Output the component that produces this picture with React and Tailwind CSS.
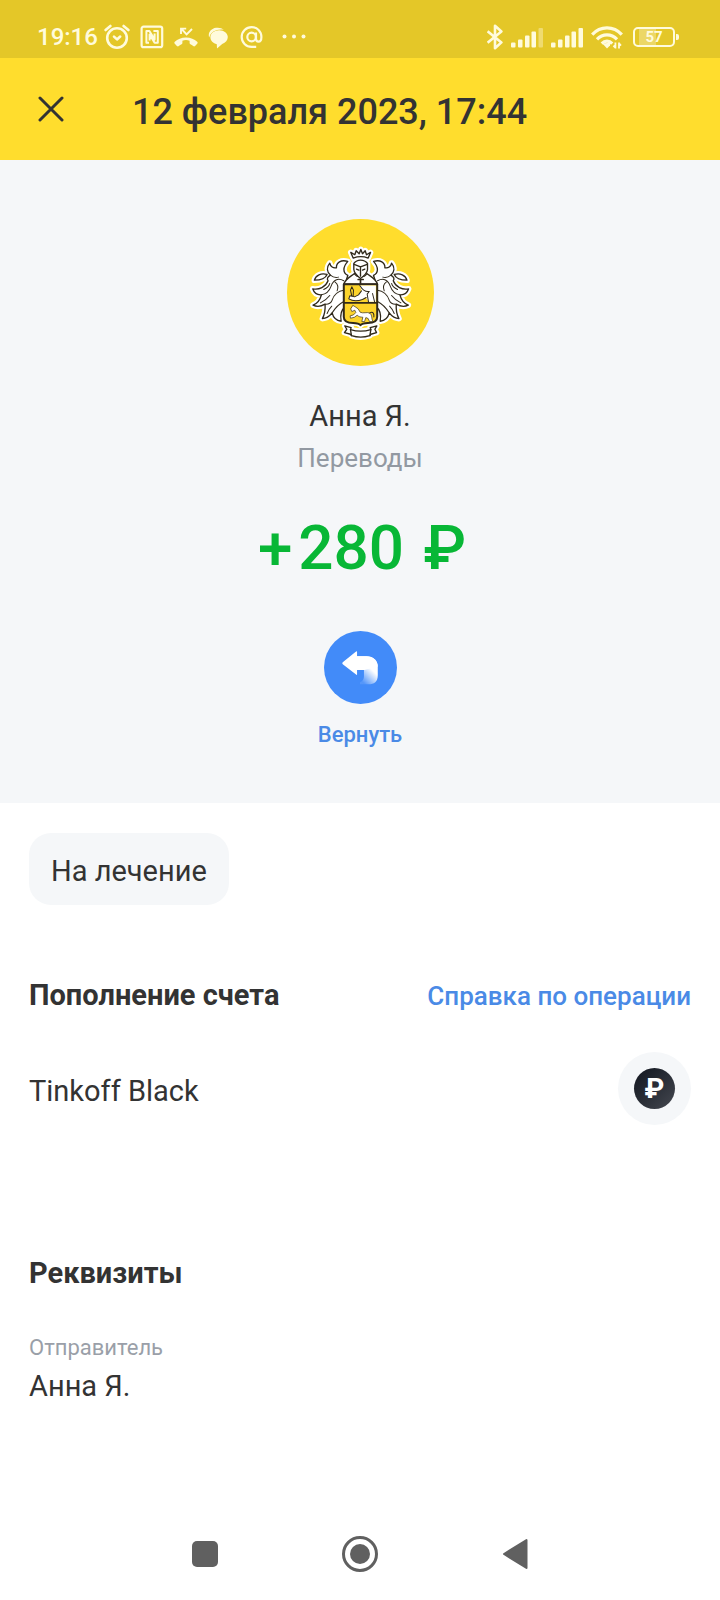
import React from "react";

function StatusBar() {
  return (
    <div className="flex h-[58px] items-center justify-between bg-[#e4c728] pt-[15px] pr-[41px] pl-[37px] text-[#fffbdc]">
      <div className="flex items-center gap-[10px]">
        <div className="flex items-center gap-[6px]">
          <span className="text-[24px] leading-[28px] font-medium">19:16</span>
          <svg className="h-[26px] w-[26px]" viewBox="0 0 26 26" fill="none" stroke="currentColor" strokeWidth="2.6" strokeLinecap="round" aria-label="Будильник">
            <circle cx="13" cy="14" r="9.8" />
            <path d="M1.6 6 6.4 2M24.4 6 19.6 2" />
            <path d="m10 12.6 3 2.8 3.2-2.8" strokeLinejoin="round" />
          </svg>
        </div>
        <svg className="h-[26px] w-[24px]" viewBox="0 0 24 26" fill="none" stroke="currentColor" strokeWidth="2.2" aria-label="NFC">
          <rect x="1.6" y="2.6" width="20.6" height="20.6" rx="2" />
          <path d="M9 18.8H6.400V7H9.400L14.600 15.600V9.400M13.400 7H17.800V18.800H14.600L9.600 10.600V16.400" strokeWidth="2" strokeLinejoin="round" />
        </svg>
        <svg className="h-[26px] w-[24px]" viewBox="0 0 24 26" fill="currentColor" aria-label="Пропущенный вызов">
          <path d="M12 13.4c4.6 0 8.4 1.7 11.2 4.4.6.6.6 1.4 0 2l-2.1 2.2c-.6.6-1.3.6-1.9.1-.9-.8-1.8-1.3-2.8-1.8-.5-.2-.8-.7-.8-1.3v-2.3c-2.3-.8-4.9-.8-7.2 0V19c0 .6-.3 1.1-.8 1.3-1 .5-1.9 1.1-2.8 1.8-.6.5-1.3.4-1.9-.1L.8 19.8c-.6-.6-.6-1.4 0-2C3.6 15.1 7.4 13.4 12 13.4Z" />
          <path d="m7.600 5 5 5.400L18 5M7 10V4.600h5.200" fill="none" stroke="currentColor" strokeWidth="1.900" />
        </svg>
        <svg className="h-[26px] w-[20px]" viewBox="0 0 20 26" fill="currentColor" aria-label="Сообщение">
          <path d="M1.200 13.600C-.4 9 2.800 4.600 8 3.800c3.200-.5 6 .4 7.800 2-7-1-13 1.800-14.600 7.800Z" />
          <path d="M11.200 6.200c4.900 0 8.600 3 8.600 6.900 0 3.400-2.200 5.800-5.600 6.900L9 24.400l-.2-4.200c-3.600-.6-6.400-3.600-6.400-6.900 0-4.100 3.900-7.100 8.800-7.100Z" />
        </svg>
        <svg className="h-[26px] w-[26px]" viewBox="0 0 26 26" fill="none" stroke="currentColor" strokeWidth="2.200" aria-label="Почта">
          <circle cx="13.600" cy="13" r="4.300" />
          <path d="M18 8.600v6.200c0 1.800 1 2.900 2.500 2.900s2.900-1.300 2.900-4.700c0-5.600-4.300-9.900-9.800-9.900S3.700 7.500 3.700 13s4.300 9.900 9.900 9.900h4.600" />
        </svg>
        <svg className="ml-2 h-[26px] w-[24px]" viewBox="0 0 24 26" fill="currentColor" aria-label="Ещё">
          <circle cx="2.500" cy="12.500" r="2" />
          <circle cx="12" cy="12.500" r="2" />
          <circle cx="21.500" cy="12.500" r="2" />
        </svg>
      </div>
      <div className="flex items-center gap-2">
        <svg className="h-[26px] w-[16px]" viewBox="0 0 16 26" fill="none" stroke="currentColor" strokeWidth="2.600" strokeLinejoin="round" aria-label="Bluetooth">
          <path d="M.6 7.200 14.400 18.400 8 24.200V1.800l6.400 5.600L.6 18.800" />
        </svg>
        <Signal full={false} />
        <Signal full={true} />
        <svg className="h-[26px] w-[34px]" viewBox="0 0 34 26" fill="none" stroke="currentColor" strokeWidth="3.200" aria-label="Wi-Fi">
          <path d="M1.200 10.600C9.400 1.600 22.600 1.600 30.800 10.600" />
          <path d="M6 15.400c5.600-6 14.400-6 20 0" />
          <path d="M10.800 19.600c3-3.200 7.400-3.200 10.400 0" />
          <path d="M11.400 19.600 16 24.600l3-3.200v-2.600Z" fill="currentColor" stroke="none" />
          <path d="M24.400 18.600v6M24.600 24l-2.200-2.400M28 24.600v-6M27.800 19.200l2.200 2.400" strokeWidth="1.800" />
        </svg>
        <div className="flex items-center" role="img" aria-label="Заряд 57%">
          <div className="flex h-[20px] w-[42px] items-center justify-center rounded-[5px] border-2 border-current bg-[linear-gradient(90deg,transparent_0_10%,#ecd766_10%_55%,transparent_55%)] text-[15px] leading-[16px] font-bold">
            57
          </div>
          <div className="ml-px h-[6px] w-[3px] rounded-r-[2px] bg-current" />
        </div>
      </div>
    </div>
  );
}

function Signal({ full }) {
  return (
    <svg className="h-[26px] w-[32px]" viewBox="0 0 32 26" fill="currentColor" aria-label="Сигнал сети">
      <rect x="0" y="18.500" width="4.500" height="5" rx="1" />
      <rect x="7" y="15.500" width="4.500" height="8" rx="1" />
      <rect x="14" y="11.500" width="4.500" height="12" rx="1" />
      <rect x="20.500" y="7.500" width="4.500" height="16" rx="1" />
      <rect x="27.500" y="4" width="4.500" height="19.500" rx="1" opacity={full ? 1 : 0.4} />
    </svg>
  );
}

const WING =
  "M142 64C122 58 107 67 108 83C98 85 90 80 88 69C77 82 80 96 90 105C82 110 78 115 83 122C76 140 56 150 37 146C41 158 50 165 63 164C60 176 50 190 38 195C50 201 62 199 74 192C75 208 73 222 66 235C78 235 88 227 95 218C98 230 106 241 122 243C119 226 121 210 134 200V130L142 106C127 98 126 82 142 64Z";
const LEAF = "M42 120C46 105 62 98 80 103C75 115 60 120 42 120Z";
const CROWN = "M218 144L211 127L223 134L227 122L236 131L241 118L246 131L254 122L258 134L270 127L263 144C250 139 232 139 218 144Z";
const HELMET = "M220 160C226 152 234 150 240 150C247 150 255 152 261 160V178C260 188 252 196 240 205C229 196 221 188 220 178Z";
const COLLAR = "M190 222C196 204 212 199 222 190C230 204 251 204 259 190C269 199 285 204 291 222Z";
const SHIELD = "M190 222H290V320C290 334 280 338 262 338C250 338 244 340 240 345C236 340 230 338 218 338C200 338 190 334 190 320Z";
const RIBBON = "M193 347L212 352L210 358C230 364 251 364 271 358L269 352L289 347L283 357L288 367L271 372L268 376C250 382 231 382 213 376L210 372L192 367L199 357Z";

function Wing() {
  return (
    <g transform="translate(60 90)">
      <path d={WING} />
      <path d={LEAF} />
    </g>
  );
}

function WingVeins() {
  return (
    <path
      transform="translate(60 90)"
      d="M130 122C112 112 98 120 92 138C87 152 78 162 63 164M130 150C114 152 100 164 95 180C91 189 84 193 74 192M130 184C114 192 104 204 95 218M104 126C112 132 114 142 110 152M90 105C98 112 106 113 114 111M70 148C80 144 86 138 88 130M60 188C72 182 82 174 88 166M80 220C84 210 88 204 94 198"
      fill="none"
      strokeWidth="3"
    />
  );
}

function Crest() {
  return (
    <svg className="h-[147px] w-[147px]" viewBox="20 27 440 440" role="img" aria-label="Герб">
      <circle cx="240" cy="247" r="220" fill="#ffdd2d" />
      <g fill="#fff" stroke="#fff" strokeWidth="17" strokeLinejoin="round">
        <Wing />
        <g transform="matrix(-1 0 0 1 481 0)">
          <Wing />
        </g>
        <path d={CROWN} />
        <path d={HELMET} />
        <path d={COLLAR} />
        <path d={SHIELD} />
        <path d={RIBBON} />
      </g>
      <g fill="#fff" stroke="#30291b" strokeWidth="4" strokeLinejoin="round" strokeLinecap="round">
        <Wing />
        <WingVeins />
        <g transform="matrix(-1 0 0 1 481 0)">
          <Wing />
          <WingVeins />
        </g>
        <path d={CROWN} />
        <path d={COLLAR} />
        <path d={HELMET} />
        <path d="M221 163L240 170L260 163M240 170V198M228 177L235 180M253 177L246 180" fill="none" />
        <path d="M233 208H248M240 208V221" fill="none" strokeWidth="5" />
        <path d={SHIELD} fill="#fcd42c" strokeWidth="6" />
        <path d="M238 226H286V275H264L256 262L246 268C232 273 216 272 205 266L208 257L222 260L234 254L243 242Z" stroke="none" />
        <path d="M238 226C244 236 254 246 266 244M266 244L260 252L264 276M205 266L208 257L222 260L234 254L243 242M205 266C218 274 234 272 246 268L257 262M214 258L210 240L214 230L219 240L218 258M276 250L282 274" fill="none" strokeWidth="3" />
        <path d="M192 278H288" strokeWidth="5" />
        <path d="M218 286L226 291L233 296L239 306C248 311 260 304 268 309C276 315 272 324 277 334L267 334L263 325L256 322L252 334L244 334L247 321C240 321 234 319 230 315L222 321L210 324L209 317L219 314L226 307L223 300L214 304L211 297Z" strokeWidth="2" />
        <path d="M268 308C278 302 281 312 280 320" fill="none" strokeWidth="3" />
        <path d={RIBBON} />
        <path d="M210 358L213 376M271 358L268 376" fill="none" />
      </g>
    </svg>
  );
}

function Hero() {
  return (
    <section className="flex flex-col items-center bg-[#f5f7f9] pt-[59px] pb-[54px]">
      <Crest />
      <h2 className="mt-8 text-[29px] leading-[36px]">Анна Я.</h2>
      <p className="mt-2 text-[26px] leading-[32px] text-[#9299a2]">Переводы</p>
      <p className="mt-[38px] pl-1 text-[62px] leading-[72px] font-medium text-[#08b736]">
        <span className="mr-[6px]">+</span>
        <span className="mr-1">280</span> ₽
      </p>
      <button type="button" className="mt-[47px] flex flex-col items-center gap-[17px]">
        <svg className="h-[73px] w-[73px]" viewBox="0 0 74 74" aria-hidden="true">
          <defs>
            <linearGradient id="tail" x1="0.8" y1="0.45" x2="0.4" y2="1">
              <stop offset="0.1" stopColor="#fff" />
              <stop offset="1" stopColor="#fff" stopOpacity="0.1" />
            </linearGradient>
          </defs>
          <circle cx="37" cy="37" r="37" fill="#428bf9" />
          <path d="M33 25.500H43C50 25.500 54.500 30 54.500 36V45C54.500 51 51 54 45 54H36.500V52Q40.500 50 40.500 46V39.500H33Z" fill="url(#tail)" />
          <path d="M33.500 21.500V44Q33.500 45 32.500 44.200L19 33.600Q18 32.700 19 31.800L32.500 20.800Q33.500 20 33.500 21.500Z" fill="#fff" />
          <path d="M33 25.500H43C50 25.500 54.500 30 54.500 36L41 39.500H33Z" fill="#fff" />
        </svg>
        <span className="text-[22px] leading-[28px] font-medium text-[#4a8ae6]">Вернуть</span>
      </button>
    </section>
  );
}

function Details() {
  return (
    <main className="flex flex-col px-[29px] pt-[30px]">
      <button type="button" className="self-start rounded-[22px] bg-[#f5f7f9] px-[22px] pt-5 pb-4 text-[29px] leading-[36px]">
        На лечение
      </button>
      <section className="mt-[72px]">
        <div className="flex items-baseline justify-between">
          <h2 className="text-[29px] leading-[36px] font-bold">Пополнение счета</h2>
          <a href="#statement" className="text-[26px] leading-[32px] font-medium text-[#4a8ae6]">
            Справка по операции
          </a>
        </div>
        <div className="mt-[39px] flex items-center justify-between">
          <span className="pt-1 text-[29px] leading-[36px]">Tinkoff Black</span>
          <span className="flex h-[73px] w-[73px] items-center justify-center rounded-full bg-[#f5f7f9]">
            <span className="flex h-[41px] w-[41px] items-center justify-center rounded-full bg-linear-to-br from-[#11161f] to-[#454850] text-[28px] leading-[32px] font-bold text-white">
              ₽
            </span>
          </span>
        </div>
      </section>
      <section className="mt-[130px]">
        <h2 className="text-[29px] leading-[36px] font-bold">Реквизиты</h2>
        <dl className="mt-[43px]">
          <dt className="text-[22px] leading-[28px] text-[#9a9fa8]">Отправитель</dt>
          <dd className="mt-[6px] text-[29px] leading-[36px]">Анна Я.</dd>
        </dl>
      </section>
    </main>
  );
}

function NavBar() {
  return (
    <nav className="mt-auto flex h-[92px] items-center justify-center gap-[107px] text-[#606060]">
      <button type="button" aria-label="Недавние" className="flex h-12 w-12 items-center justify-center">
        <span className="h-[26px] w-[26px] rounded-[5px] bg-current" />
      </button>
      <button type="button" aria-label="Домой" className="flex h-12 w-12 items-center justify-center">
        <span className="flex h-[36px] w-[36px] items-center justify-center rounded-full border-3 border-current">
          <span className="h-[20px] w-[20px] rounded-full bg-current" />
        </span>
      </button>
      <button type="button" aria-label="Назад" className="flex h-12 w-12 items-center justify-center">
        <svg className="h-[32px] w-[26px]" viewBox="0 0 26 32" fill="currentColor" stroke="currentColor" strokeWidth="2" strokeLinejoin="round">
          <path d="M2 16 24.500 2v28Z" />
        </svg>
      </button>
    </nav>
  );
}

export default function App() {
  return (
    <div className="flex min-h-screen flex-col bg-white font-[Roboto,sans-serif] text-[#333333]">
      <StatusBar />
      <header className="flex h-[102px] items-center bg-[#ffdd2d] px-[27px]">
        <button type="button" aria-label="Закрыть" className="flex h-12 w-12 items-center justify-center">
          <svg className="h-[26px] w-[26px]" viewBox="0 0 26 26" fill="none" stroke="currentColor" strokeWidth="3" strokeLinecap="round">
            <path d="M2 2 24 24M24 2 2 24" />
          </svg>
        </button>
        <h1 className="ml-[57px] pt-[6px] text-[36px] leading-[44px] font-medium">12 февраля 2023, 17:44</h1>
      </header>
      <Hero />
      <Details />
      <NavBar />
    </div>
  );
}
